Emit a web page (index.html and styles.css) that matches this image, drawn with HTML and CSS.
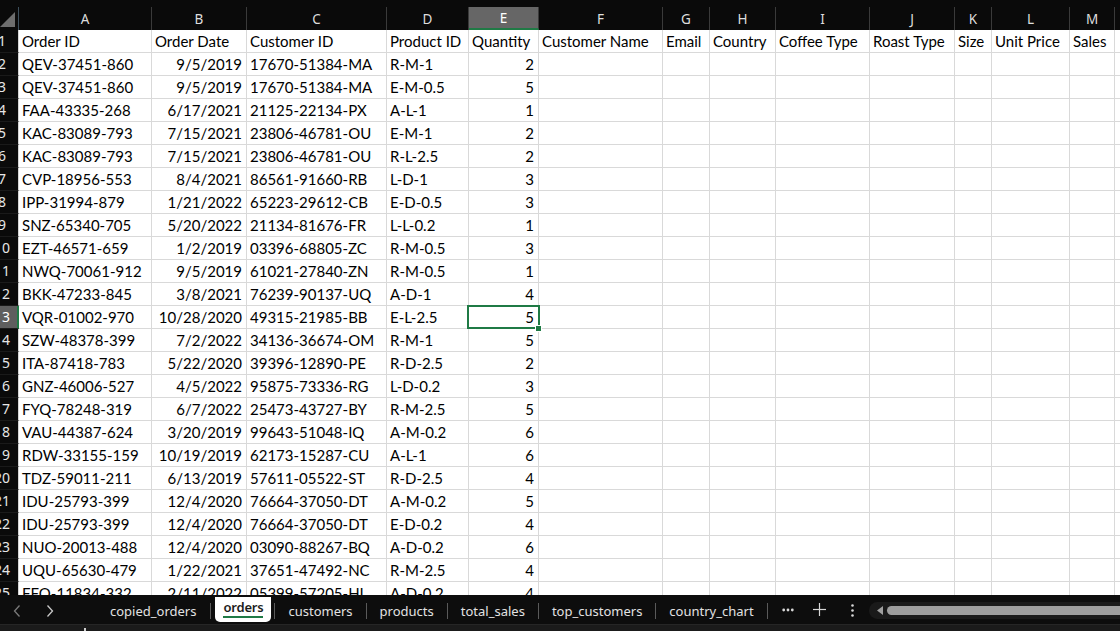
FILE: index.html
```html
<!DOCTYPE html>
<html>
<head>
<meta charset="utf-8">
<link rel="stylesheet" href="styles.css">
</head>
<body>
<div class="app">
  <div class="topstrip"></div>
  <div class="sheet">
    <div class="grid">
      <div class="corner"><svg width="16" height="17" viewBox="0 0 16 17"><polygon points="0,17 15,17 15,2" fill="#6e6e6e"/></svg></div>
      <div class="ch">A</div><div class="ch">B</div><div class="ch">C</div><div class="ch">D</div><div class="ch chsel">E</div><div class="ch">F</div><div class="ch">G</div><div class="ch">H</div><div class="ch">I</div><div class="ch">J</div><div class="ch">K</div><div class="ch">L</div><div class="ch">M</div><div class="ch">N</div>

      <div class="rh"><span>1</span></div><div class="c">Order ID</div><div class="c">Order Date</div><div class="c">Customer ID</div><div class="c">Product ID</div><div class="c">Quantity</div><div class="c">Customer Name</div><div class="c">Email</div><div class="c">Country</div><div class="c">Coffee Type</div><div class="c">Roast Type</div><div class="c">Size</div><div class="c">Unit Price</div><div class="c">Sales</div><div class="c"></div>

      <div class="rh"><span>2</span></div><div class="c">QEV-37451-860</div><div class="c r">9/5/2019</div><div class="c">17670-51384-MA</div><div class="c">R-M-1</div><div class="c r">2</div><div class="c"></div><div class="c"></div><div class="c"></div><div class="c"></div><div class="c"></div><div class="c"></div><div class="c"></div><div class="c"></div><div class="c"></div>
      <div class="rh"><span>3</span></div><div class="c">QEV-37451-860</div><div class="c r">9/5/2019</div><div class="c">17670-51384-MA</div><div class="c">E-M-0.5</div><div class="c r">5</div><div class="c"></div><div class="c"></div><div class="c"></div><div class="c"></div><div class="c"></div><div class="c"></div><div class="c"></div><div class="c"></div><div class="c"></div>
      <div class="rh"><span>4</span></div><div class="c">FAA-43335-268</div><div class="c r">6/17/2021</div><div class="c">21125-22134-PX</div><div class="c">A-L-1</div><div class="c r">1</div><div class="c"></div><div class="c"></div><div class="c"></div><div class="c"></div><div class="c"></div><div class="c"></div><div class="c"></div><div class="c"></div><div class="c"></div>
      <div class="rh"><span>5</span></div><div class="c">KAC-83089-793</div><div class="c r">7/15/2021</div><div class="c">23806-46781-OU</div><div class="c">E-M-1</div><div class="c r">2</div><div class="c"></div><div class="c"></div><div class="c"></div><div class="c"></div><div class="c"></div><div class="c"></div><div class="c"></div><div class="c"></div><div class="c"></div>
      <div class="rh"><span>6</span></div><div class="c">KAC-83089-793</div><div class="c r">7/15/2021</div><div class="c">23806-46781-OU</div><div class="c">R-L-2.5</div><div class="c r">2</div><div class="c"></div><div class="c"></div><div class="c"></div><div class="c"></div><div class="c"></div><div class="c"></div><div class="c"></div><div class="c"></div><div class="c"></div>
      <div class="rh"><span>7</span></div><div class="c">CVP-18956-553</div><div class="c r">8/4/2021</div><div class="c">86561-91660-RB</div><div class="c">L-D-1</div><div class="c r">3</div><div class="c"></div><div class="c"></div><div class="c"></div><div class="c"></div><div class="c"></div><div class="c"></div><div class="c"></div><div class="c"></div><div class="c"></div>
      <div class="rh"><span>8</span></div><div class="c">IPP-31994-879</div><div class="c r">1/21/2022</div><div class="c">65223-29612-CB</div><div class="c">E-D-0.5</div><div class="c r">3</div><div class="c"></div><div class="c"></div><div class="c"></div><div class="c"></div><div class="c"></div><div class="c"></div><div class="c"></div><div class="c"></div><div class="c"></div>
      <div class="rh"><span>9</span></div><div class="c">SNZ-65340-705</div><div class="c r">5/20/2022</div><div class="c">21134-81676-FR</div><div class="c">L-L-0.2</div><div class="c r">1</div><div class="c"></div><div class="c"></div><div class="c"></div><div class="c"></div><div class="c"></div><div class="c"></div><div class="c"></div><div class="c"></div><div class="c"></div>
      <div class="rh"><span>10</span></div><div class="c">EZT-46571-659</div><div class="c r">1/2/2019</div><div class="c">03396-68805-ZC</div><div class="c">R-M-0.5</div><div class="c r">3</div><div class="c"></div><div class="c"></div><div class="c"></div><div class="c"></div><div class="c"></div><div class="c"></div><div class="c"></div><div class="c"></div><div class="c"></div>
      <div class="rh"><span>11</span></div><div class="c">NWQ-70061-912</div><div class="c r">9/5/2019</div><div class="c">61021-27840-ZN</div><div class="c">R-M-0.5</div><div class="c r">1</div><div class="c"></div><div class="c"></div><div class="c"></div><div class="c"></div><div class="c"></div><div class="c"></div><div class="c"></div><div class="c"></div><div class="c"></div>
      <div class="rh"><span>12</span></div><div class="c">BKK-47233-845</div><div class="c r">3/8/2021</div><div class="c">76239-90137-UQ</div><div class="c">A-D-1</div><div class="c r">4</div><div class="c"></div><div class="c"></div><div class="c"></div><div class="c"></div><div class="c"></div><div class="c"></div><div class="c"></div><div class="c"></div><div class="c"></div>
      <div class="rh rhsel"><span>13</span></div><div class="c">VQR-01002-970</div><div class="c r">10/28/2020</div><div class="c">49315-21985-BB</div><div class="c">E-L-2.5</div><div class="c r sel">5</div><div class="c"></div><div class="c"></div><div class="c"></div><div class="c"></div><div class="c"></div><div class="c"></div><div class="c"></div><div class="c"></div><div class="c"></div>
      <div class="rh"><span>14</span></div><div class="c">SZW-48378-399</div><div class="c r">7/2/2022</div><div class="c">34136-36674-OM</div><div class="c">R-M-1</div><div class="c r">5</div><div class="c"></div><div class="c"></div><div class="c"></div><div class="c"></div><div class="c"></div><div class="c"></div><div class="c"></div><div class="c"></div><div class="c"></div>
      <div class="rh"><span>15</span></div><div class="c">ITA-87418-783</div><div class="c r">5/22/2020</div><div class="c">39396-12890-PE</div><div class="c">R-D-2.5</div><div class="c r">2</div><div class="c"></div><div class="c"></div><div class="c"></div><div class="c"></div><div class="c"></div><div class="c"></div><div class="c"></div><div class="c"></div><div class="c"></div>
      <div class="rh"><span>16</span></div><div class="c">GNZ-46006-527</div><div class="c r">4/5/2022</div><div class="c">95875-73336-RG</div><div class="c">L-D-0.2</div><div class="c r">3</div><div class="c"></div><div class="c"></div><div class="c"></div><div class="c"></div><div class="c"></div><div class="c"></div><div class="c"></div><div class="c"></div><div class="c"></div>
      <div class="rh"><span>17</span></div><div class="c">FYQ-78248-319</div><div class="c r">6/7/2022</div><div class="c">25473-43727-BY</div><div class="c">R-M-2.5</div><div class="c r">5</div><div class="c"></div><div class="c"></div><div class="c"></div><div class="c"></div><div class="c"></div><div class="c"></div><div class="c"></div><div class="c"></div><div class="c"></div>
      <div class="rh"><span>18</span></div><div class="c">VAU-44387-624</div><div class="c r">3/20/2019</div><div class="c">99643-51048-IQ</div><div class="c">A-M-0.2</div><div class="c r">6</div><div class="c"></div><div class="c"></div><div class="c"></div><div class="c"></div><div class="c"></div><div class="c"></div><div class="c"></div><div class="c"></div><div class="c"></div>
      <div class="rh"><span>19</span></div><div class="c">RDW-33155-159</div><div class="c r">10/19/2019</div><div class="c">62173-15287-CU</div><div class="c">A-L-1</div><div class="c r">6</div><div class="c"></div><div class="c"></div><div class="c"></div><div class="c"></div><div class="c"></div><div class="c"></div><div class="c"></div><div class="c"></div><div class="c"></div>
      <div class="rh"><span>20</span></div><div class="c">TDZ-59011-211</div><div class="c r">6/13/2019</div><div class="c">57611-05522-ST</div><div class="c">R-D-2.5</div><div class="c r">4</div><div class="c"></div><div class="c"></div><div class="c"></div><div class="c"></div><div class="c"></div><div class="c"></div><div class="c"></div><div class="c"></div><div class="c"></div>
      <div class="rh"><span>21</span></div><div class="c">IDU-25793-399</div><div class="c r">12/4/2020</div><div class="c">76664-37050-DT</div><div class="c">A-M-0.2</div><div class="c r">5</div><div class="c"></div><div class="c"></div><div class="c"></div><div class="c"></div><div class="c"></div><div class="c"></div><div class="c"></div><div class="c"></div><div class="c"></div>
      <div class="rh"><span>22</span></div><div class="c">IDU-25793-399</div><div class="c r">12/4/2020</div><div class="c">76664-37050-DT</div><div class="c">E-D-0.2</div><div class="c r">4</div><div class="c"></div><div class="c"></div><div class="c"></div><div class="c"></div><div class="c"></div><div class="c"></div><div class="c"></div><div class="c"></div><div class="c"></div>
      <div class="rh"><span>23</span></div><div class="c">NUO-20013-488</div><div class="c r">12/4/2020</div><div class="c">03090-88267-BQ</div><div class="c">A-D-0.2</div><div class="c r">6</div><div class="c"></div><div class="c"></div><div class="c"></div><div class="c"></div><div class="c"></div><div class="c"></div><div class="c"></div><div class="c"></div><div class="c"></div>
      <div class="rh"><span>24</span></div><div class="c">UQU-65630-479</div><div class="c r">1/22/2021</div><div class="c">37651-47492-NC</div><div class="c">R-M-2.5</div><div class="c r">4</div><div class="c"></div><div class="c"></div><div class="c"></div><div class="c"></div><div class="c"></div><div class="c"></div><div class="c"></div><div class="c"></div><div class="c"></div>
      <div class="rh"><span>25</span></div><div class="c">FFO-11834-332</div><div class="c r">2/11/2022</div><div class="c">05399-57205-HI</div><div class="c">A-D-0.2</div><div class="c r">4</div><div class="c"></div><div class="c"></div><div class="c"></div><div class="c"></div><div class="c"></div><div class="c"></div><div class="c"></div><div class="c"></div><div class="c"></div>
    </div>
  </div>
  <div class="tabbar">
    <div class="nav">
      <svg class="chev dim" width="8" height="14" viewBox="0 0 8 14"><polyline points="6.5,1.5 1.5,7 6.5,12.5" fill="none" stroke="#7a7a7a" stroke-width="1.3"/></svg>
      <svg class="chev" width="8" height="14" viewBox="0 0 8 14"><polyline points="1.5,1.5 6.5,7 1.5,12.5" fill="none" stroke="#c8c8c8" stroke-width="1.3"/></svg>
    </div>
    <div class="tab first">copied_orders</div>
    <span class="sep"></span>
    <div class="tab active"><span class="label">orders</span></div>
    <span class="sep"></span>
    <div class="tab">customers</div>
    <span class="sep"></span>
    <div class="tab">products</div>
    <span class="sep"></span>
    <div class="tab">total_sales</div>
    <span class="sep"></span>
    <div class="tab">top_customers</div>
    <span class="sep"></span>
    <div class="tab">country_chart</div>
    <span class="sep"></span>
    <div class="tool more"><svg width="12" height="4" viewBox="0 0 12 4"><circle cx="1.7" cy="2" r="1.4" fill="#d8d8d8"/><circle cx="6" cy="2" r="1.4" fill="#d8d8d8"/><circle cx="10.3" cy="2" r="1.4" fill="#d8d8d8"/></svg></div>
    <div class="tool plus"><svg width="13" height="13" viewBox="0 0 13 13"><line x1="6.5" y1="0" x2="6.5" y2="13" stroke="#d8d8d8" stroke-width="1.2"/><line x1="0" y1="6.5" x2="13" y2="6.5" stroke="#d8d8d8" stroke-width="1.2"/></svg></div>
    <div class="tool kebab"><svg width="3" height="13" viewBox="0 0 3 13"><circle cx="1.5" cy="1.5" r="1.3" fill="#d8d8d8"/><circle cx="1.5" cy="6.5" r="1.3" fill="#d8d8d8"/><circle cx="1.5" cy="11.5" r="1.3" fill="#d8d8d8"/></svg></div>
    <div class="hscroll">
      <svg class="larrow" width="6" height="9" viewBox="0 0 6 9"><polygon points="6,0 6,9 0,4.5" fill="#a0a0a0"/></svg>
      <div class="thumb"></div>
    </div>
  </div>
  <div class="statusbar"><span class="mark"></span></div>
</div>
</body>
</html>
```

FILE: styles.css
```css
html, body {
  margin: 0;
  padding: 0;
  background: #0a0a0a;
}
.app {
  width: 1120px;
  height: 631px;
  overflow: hidden;
  display: flex;
  flex-direction: column;
  background: #0a0a0a;
}
.topstrip {
  height: 7px;
  flex: none;
  background: #0a0a0a;
}
.sheet {
  height: 588px;
  flex: none;
  overflow: hidden;
}
.grid {
  display: grid;
  grid-template-columns: 19px 133px 95px 140px 82px 70px 124px 47px 66px 94px 85px 37px 78px 45px 80px;
  grid-auto-rows: 23px;
  width: 1195px;
}
.corner {
  background: #0a0a0a;
  border-right: 1px solid #3d4f5c;
  box-sizing: border-box;
  display: flex;
  align-items: flex-start;
  padding-top: 3px;
}
.ch {
  background: #0a0a0a;
  color: #dedede;
  font-family: "Noto Sans", "Open Sans", sans-serif;
  font-size: 13.5px;
  line-height: 24px;
  text-align: center;
  border-right: 1px solid #3a3a3a;
  box-sizing: border-box;
}
.chsel {
  background: #666666;
  color: #ffffff;
  border-bottom: 2px solid #1f7a45;
  line-height: 22px;
}
.rh {
  background: #0a0a0a;
  color: #e6e6e6;
  font-family: "Noto Sans", "Open Sans", sans-serif;
  font-size: 14px;
  line-height: 22px;
  overflow: hidden;
  border-right: 1px solid #d4d4d4;
  border-bottom: 1px solid #1a1a1a;
  box-sizing: border-box;
}
.rh span {
  display: block;
  width: 40px;
  margin-left: -18px;
  text-align: center;
}
.rhsel {
  background: #5e5e5e;
  color: #ffffff;
  border-right: 2px solid #1f7a45;
}
.c {
  background: #ffffff;
  color: #000000;
  font-family: "Lato", "Liberation Sans", sans-serif;
  font-size: 15px;
  line-height: 22px;
  padding: 0 3px;
  border-right: 1px solid #d9d9d9;
  border-bottom: 1px solid #d9d9d9;
  box-sizing: border-box;
  white-space: nowrap;
  overflow: hidden;
}
.r {
  text-align: right;
  padding-right: 4px;
}
.sel {
  position: relative;
  overflow: visible;
}
.sel::after {
  content: "";
  position: absolute;
  left: -2px;
  top: -1px;
  right: -2px;
  bottom: -1px;
  border: 2px solid #1f7a45;
}
.sel::before {
  content: "";
  position: absolute;
  right: -4px;
  bottom: -4px;
  width: 5px;
  height: 5px;
  background: #1f7a45;
  border: 1px solid #ffffff;
  z-index: 2;
}
.tabbar {
  height: 29px;
  flex: none;
  background: #0d0d0d;
  display: flex;
  align-items: center;
  font-family: "Noto Sans", "Open Sans", sans-serif;
  font-size: 13px;
  color: #e2e2e2;
}
.nav {
  width: 97px;
  flex: none;
  display: flex;
  align-items: center;
  gap: 25px;
  padding-left: 13px;
  box-sizing: border-box;
  padding-top: 3px;
}
.tab {
  padding: 0 13px;
  white-space: nowrap;
  padding-top: 3px;
}
.tab.first {
  padding-right: 14px;
}
.tab.active {
  align-self: flex-start;
  margin: 2px 3px 0 4px;
  height: 25px;
  padding: 0 8px;
  background: #ffffff;
  color: #1c1c1c;
  font-weight: 600;
  letter-spacing: -0.2px;
  border-radius: 0 0 5px 5px;
  box-sizing: border-box;
  display: flex;
  align-items: flex-start;
}
.tab.active .label {
  display: block;
  line-height: 17px;
  padding-top: 2px;
  border-bottom: 2.5px solid #1f7a45;
}
.sep {
  width: 1px;
  height: 16px;
  background: #5a5a5a;
  flex: none;
  margin-top: 3px;
}
.tool {
  display: flex;
  align-items: center;
  flex: none;
}
.more {
  margin-left: 14px;
  margin-top: 1px;
}
.plus {
  margin-left: 19px;
}
.kebab {
  margin-left: 25px;
  margin-top: 2px;
}
.hscroll {
  margin-left: 15px;
  flex: 1;
  height: 17px;
  background: #1a1a1a;
  border-radius: 9px 0 0 9px;
  display: flex;
  align-items: center;
  padding-left: 8px;
  margin-top: 1px;
}
.larrow {
  flex: none;
}
.thumb {
  margin-left: 4px;
  flex: 1;
  height: 9px;
  background: #9e9e9e;
  border-radius: 5px 0 0 5px;
}
.statusbar {
  flex: 1;
  background: #1b1b1b;
  border-top: 1px solid #262626;
  position: relative;
}
.mark {
  position: absolute;
  left: 84px;
  top: 3px;
  width: 2px;
  height: 3px;
  background: #cfcfcf;
}
```
